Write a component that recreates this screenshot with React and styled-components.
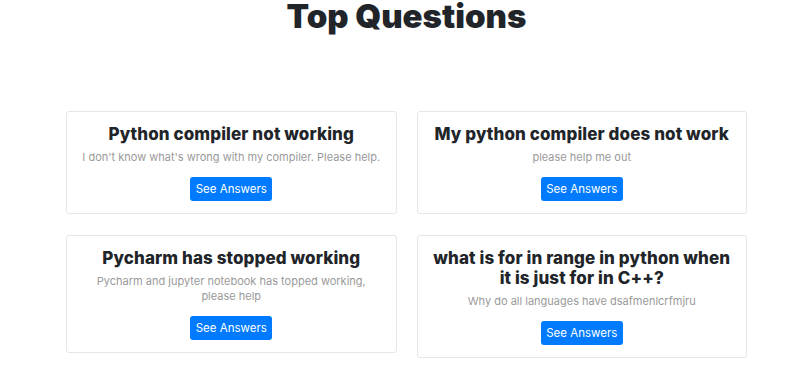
import styled, { createGlobalStyle } from "styled-components";

const GlobalStyle = createGlobalStyle`
  html, body {
    margin: 0;
    padding: 0;
    background: #ffffff;
    font-family: "Inter", "Open Sans", sans-serif;
    color: #212529;
  }
`;

const Page = styled.main`
  width: 681px;
  margin-left: 66px;
`;

const Heading = styled.h1`
  margin: 0;
  text-align: center;
  font-size: 33px;
  line-height: 32px;
  font-weight: 900;
  color: #212529;
`;

const Grid = styled.section`
  display: grid;
  grid-template-columns: 1fr 1fr;
  column-gap: 20px;
  row-gap: 21px;
  align-items: start;
  margin-top: 79px;
`;

const Card = styled.article`
  border: 1px solid #e6e6e6;
  border-radius: 3px;
  padding: 12px 14px;
  text-align: center;
`;

const CardTitle = styled.h2`
  margin: 0;
  font-size: 17px;
  line-height: 20px;
  font-weight: 800;
  letter-spacing: 0.1px;
  color: #212529;
`;

const CardText = styled.p`
  margin: 6px 0 0;
  font-size: 11px;
  line-height: 15px;
  color: #9a9a9a;
`;

const AnswerButton = styled.button`
  margin-top: 12px;
  height: 24px;
  width: 82px;
  padding: 0;
  border: none;
  border-radius: 3px;
  background: #007bff;
  color: #ffffff;
  font-family: inherit;
  font-size: 11.5px;
  white-space: nowrap;
  cursor: pointer;
`;

const questions = [
  {
    title: "Python compiler not working",
    text: "I don't know what's wrong with my compiler. Please help.",
  },
  {
    title: "My python compiler does not work",
    text: "please help me out",
  },
  {
    title: "Pycharm has stopped working",
    text: "Pycharm and jupyter notebook has topped working, please help",
  },
  {
    title: "what is for in range in python when it is just for in C++?",
    text: "Why do all languages have dsafmenlcrfmjru",
  },
];

export default function App() {
  return (
    <>
      <GlobalStyle />
      <Page>
        <Heading>Top Questions</Heading>
        <Grid>
          {questions.map((q) => (
            <Card key={q.title}>
              <CardTitle>{q.title}</CardTitle>
              <CardText>{q.text}</CardText>
              <AnswerButton>See Answers</AnswerButton>
            </Card>
          ))}
        </Grid>
      </Page>
    </>
  );
}
